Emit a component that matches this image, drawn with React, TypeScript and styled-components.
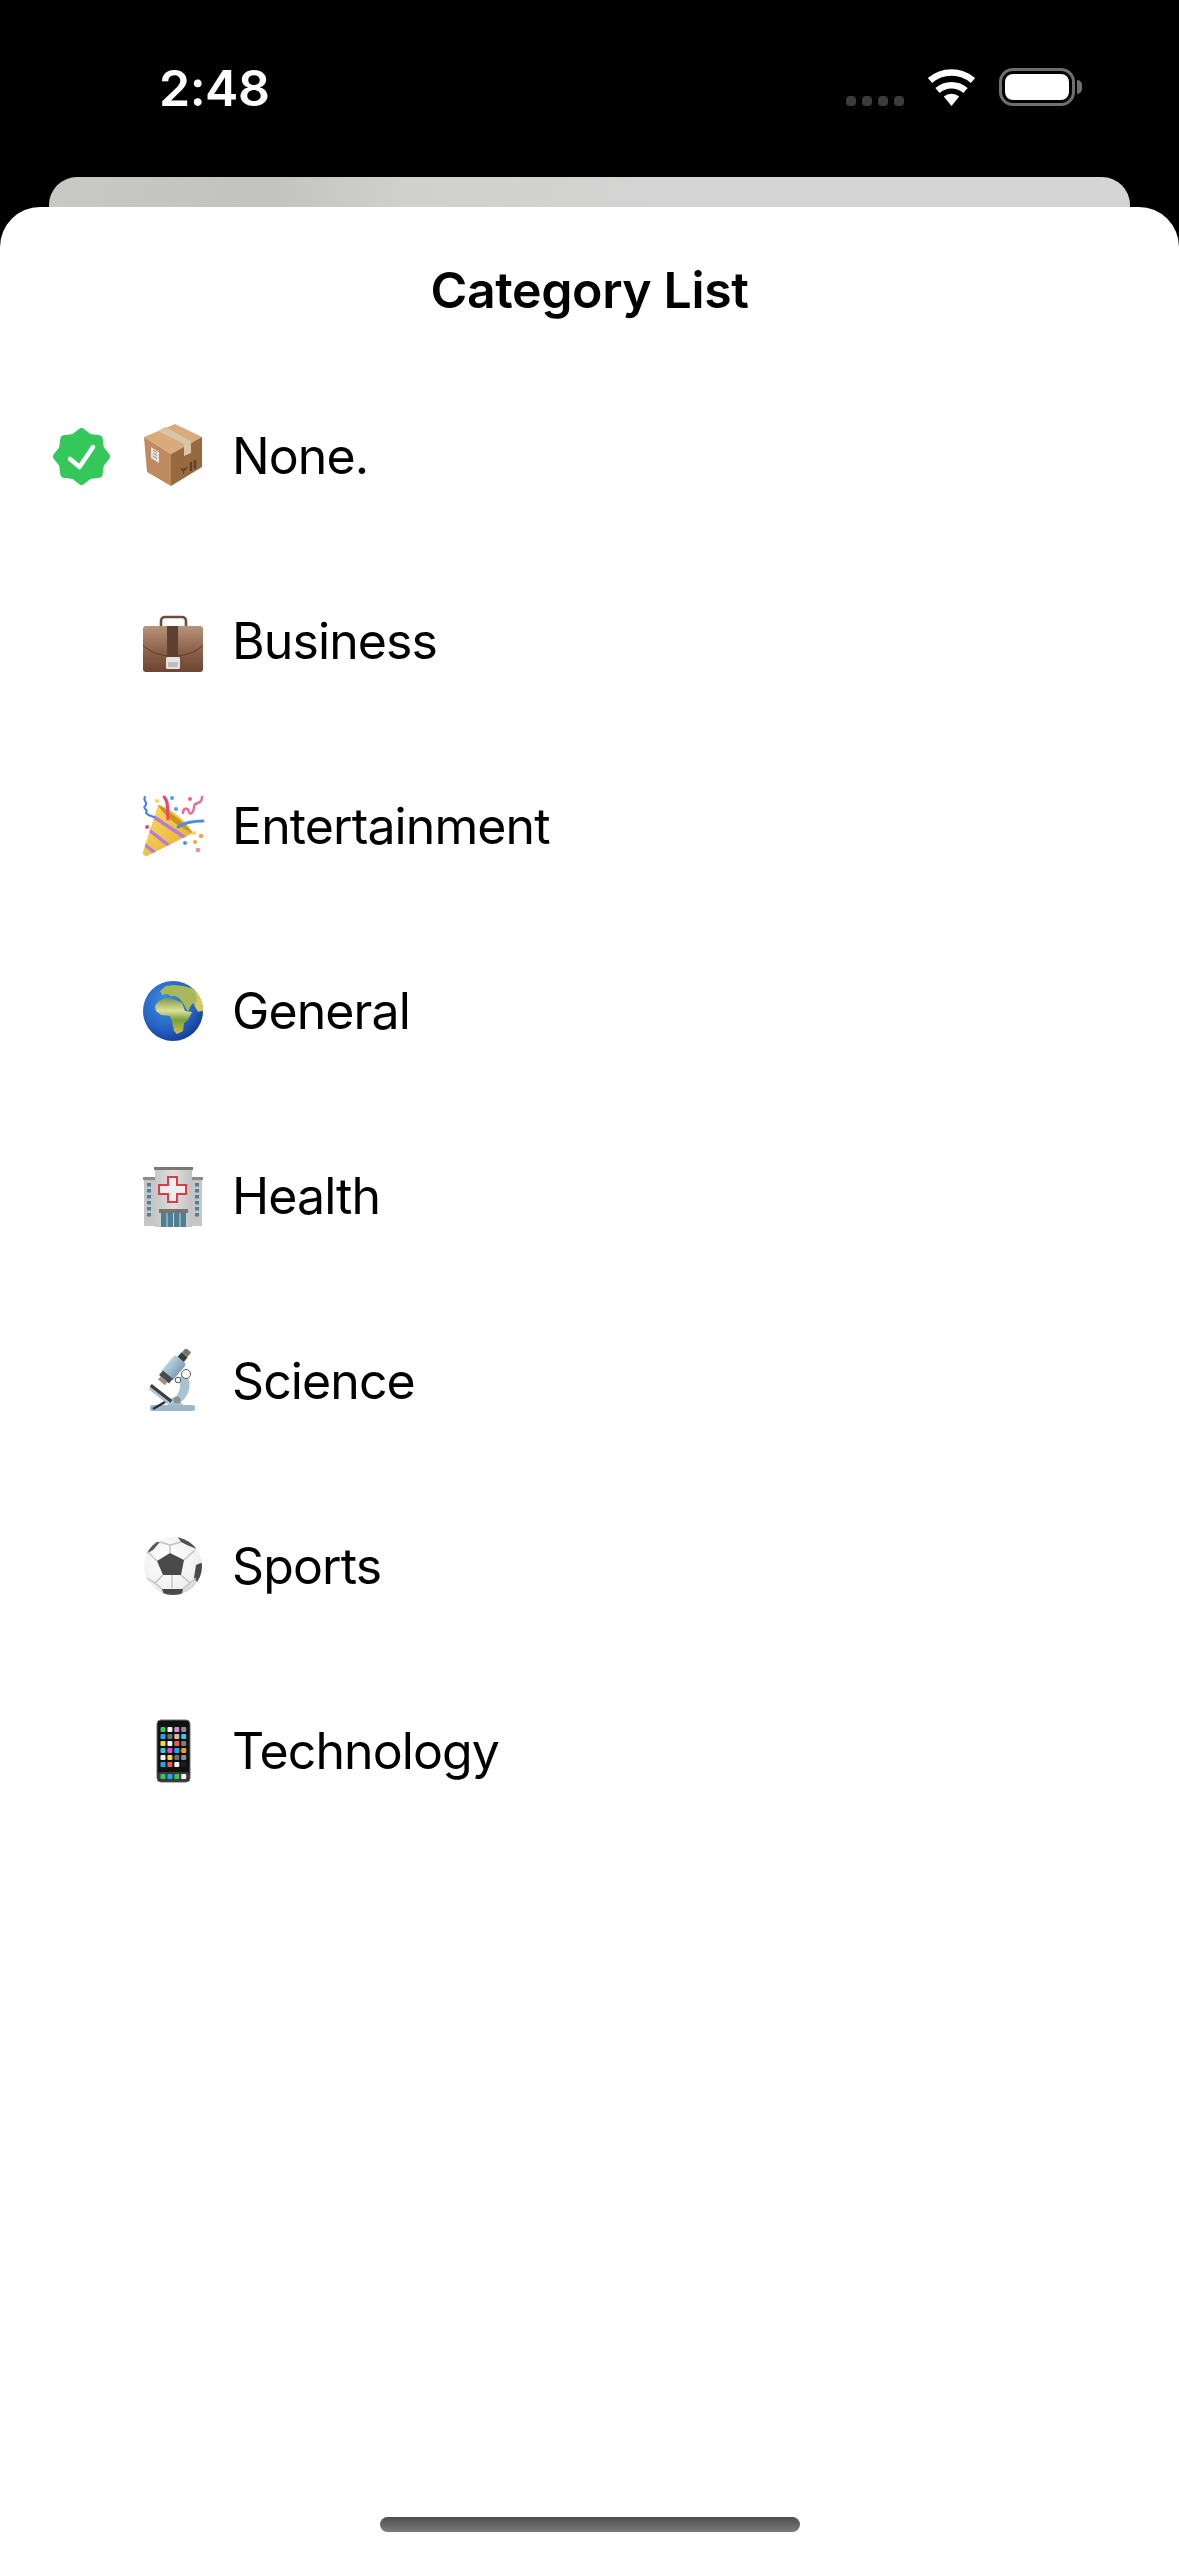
import styled, { createGlobalStyle } from "styled-components";
import type { ReactNode } from "react";

const GlobalStyle = createGlobalStyle`
  *,*::before,*::after{ box-sizing:border-box; }
  html,body,#root{ height:100%; }
  body{
    margin:0;
    background:#000;
    font-family: Inter, "Liberation Sans", sans-serif;
    -webkit-font-smoothing:antialiased;
  }
`;

const Page = styled.div`
  display: flex;
  flex-direction: column;
  height: 2556px;
  background: #000;
`;

/* --- Status bar --- */
const StatusBar = styled.header`
  display: flex;
  justify-content: space-between;
  align-items: flex-start;
  height: 177px;
  padding: 58px 104px 0 159px;
`;

const Clock = styled.span`
  color: #fff;
  font-size: 50px;
  line-height: 60px;
  font-weight: 600;
  letter-spacing: -0.5px;
`;

const StatusIcons = styled.div`
  display: flex;
  align-items: flex-end;
  margin-top: 10px;
`;

const SignalDots = styled.div`
  display: flex;
  gap: 6px;
  margin-right: 23px;
`;

const SignalDot = styled.i`
  display: block;
  width: 10px;
  height: 10px;
  border-radius: 4px;
  background: #3b3b3b;
`;

const Wifi = styled.svg`
  display: block;
  width: 49px;
  height: 37px;
  margin-right: 23px;
`;

const Battery = styled.div`
  position: relative;
  width: 76px;
  height: 38px;
  padding: 3px;
  border: 3px solid #6f6f6f;
  border-radius: 14px;

  &::after {
    content: "";
    position: absolute;
    top: 9px;
    right: -10px;
    width: 5px;
    height: 14px;
    border-radius: 0 5px 5px 0;
    background: #6f6f6f;
  }
`;

const BatteryLevel = styled.div`
  height: 100%;
  border-radius: 8px;
  background: #fff;
`;

/* --- Sheets --- */
const BackCard = styled.div`
  flex: none;
  height: 30px;
  margin: 0 49px;
  border-radius: 28px 28px 0 0;
  background: linear-gradient(90deg, #c8c8c6 0%, #c2c2c0 20%, #d0d0ce 33%, #d5d5d5 60%, #d5d5d5 100%);
`;

const Sheet = styled.main`
  flex: 1;
  display: flex;
  flex-direction: column;
  border-radius: 40px 40px 0 0;
  background: #fff;
`;

const Title = styled.h1`
  margin: 0;
  padding: 53px 0 44px;
  color: #000;
  font-size: 50px;
  line-height: 60px;
  font-weight: 600;
  letter-spacing: -0.4px;
  text-align: center;
`;

const List = styled.ul`
  margin: 0;
  padding: 0;
  list-style: none;
`;

const Row = styled.li`
  display: flex;
  align-items: center;
  height: 184.9px;
  padding-left: 53px;
`;

const CheckSlot = styled.div`
  flex: none;
  width: 57px;
  height: 57px;
  margin-right: 31px;
`;

const Glyph = styled.svg`
  display: block;
  flex: none;
  width: 64px;
  height: 64px;
  margin-right: 27px;
`;

const Label = styled.span`
  color: #000;
  font-size: 50px;
  line-height: 60px;
  font-weight: 400;
  letter-spacing: -0.9px;
`;

const HomeIndicator = styled.div`
  flex: none;
  width: 420px;
  height: 15px;
  margin: auto auto 24px;
  border-radius: 8px;
  background: linear-gradient(180deg, #4e4e4e, #7c7c7c);
`;

/* --- Drawings --- */
function sealPoints() {
  const pts: string[] = [];
  for (let i = 0; i < 16; i++) {
    const r = i % 2 === 0 ? 25 : 20.5;
    const a = (i * Math.PI) / 8 - Math.PI / 2;
    pts.push(`${(28.5 + r * Math.cos(a)).toFixed(2)},${(28.5 + r * Math.sin(a)).toFixed(2)}`);
  }
  return pts.join(" ");
}

const CheckBadge = () => (
  <svg viewBox="0 0 57 57" width="57" height="57">
    <polygon points={sealPoints()} fill="#34c759" stroke="#34c759" strokeWidth="7" strokeLinejoin="round" />
    <path d="M17 31l9.500 8L40 19" fill="none" stroke="#fff" strokeWidth="4.500" strokeLinecap="round" strokeLinejoin="round" />
  </svg>
);

const WifiIcon = () => (
  <Wifi viewBox="0 0 49 37">
    <path d="M24.5 37L16.8 27.6A12 12 0 0 1 32.2 27.6Z" fill="#fff" />
    <path d="M10.5 21.5A21 21 0 0 1 38.5 21.5" fill="none" stroke="#fff" strokeWidth="6.5" />
    <path d="M3 11.5A33 33 0 0 1 46 11.5" fill="none" stroke="#fff" strokeWidth="6.5" />
  </Wifi>
);

const BoxGlyph = () => (
  <Glyph viewBox="0 0 64 64">
    <path d="M34 0L61 13L30 30L3 13Z" fill="#d9ab7c" />
    <path d="M3 13L30 30V62L6 48Z" fill="#bd8b5f" />
    <path d="M61 13V43L30 62V30Z" fill="#96693f" />
    <path d="M17 7L24 3L50 17V29L43 32V20Z" fill="#d8c4a6" />
    <path d="M10 23L18 28V39L10 34Z" fill="#e6e2dc" />
    <path d="M12 26l4 2.5M12 29l4 2.5M12 32l4 2.5" stroke="#8a8a86" strokeWidth="1" />
    <path d="M40 44l3 1 3-3-1 4-2 1v3h-1v-3l-2-1z" fill="#5d412a" />
    <path d="M50 38v9M54 36v9" stroke="#5d412a" strokeWidth="2.4" />
  </Glyph>
);

const BriefcaseGlyph = () => (
  <Glyph viewBox="0 0 64 64">
    <defs>
      <linearGradient id="bag" x1="0" y1="0" x2="0" y2="1">
        <stop offset="0" stopColor="#b8937a" />
        <stop offset="0.55" stopColor="#8a6149" />
        <stop offset="1" stopColor="#6b4433" />
      </linearGradient>
    </defs>
    <path d="M20 17v-5c0-2.500 2-4 4-4h17c2 0 4 1.500 4 4v5" fill="none" stroke="#6e4c39" strokeWidth="2.600" />
    <rect x="2" y="17" width="60" height="46" rx="3" fill="url(#bag)" />
    <path d="M2 36c8 8 18 11 30 11s22-3 30-11" fill="none" stroke="#5c3b2b" strokeWidth="1" />
    <rect x="26" y="17" width="11" height="32" fill="#5f3f2f" />
    <rect x="25" y="48" width="14" height="12" rx="1.500" fill="#e4e4e2" />
    <rect x="27" y="53" width="10" height="5" rx="1" fill="#bdbdbb" />
  </Glyph>
);

const PopperGlyph = () => (
  <Glyph viewBox="0 0 64 64">
    <defs>
      <linearGradient id="cone" x1="0" y1="0" x2="1" y2="1">
        <stop offset="0" stopColor="#fbdc62" />
        <stop offset="1" stopColor="#e6ab2e" />
      </linearGradient>
      <clipPath id="coneClip">
        <path d="M2 58L17 11L52 39L6 62Q1 62 2 58Z" />
      </clipPath>
    </defs>
    <path d="M2 58L17 11C28 12 46 28 52 39L6 62Q1 62 2 58Z" fill="url(#cone)" />
    <g clipPath="url(#coneClip)" fill="none" stroke="#b67ad8" strokeWidth="3.400">
      <path d="M8 36L36 58" />
      <path d="M13 23L46 45" />
      <path d="M3 50L18 62" />
    </g>
    <path d="M17 11C24 13 42 28 52 39C44 37 24 24 17 11Z" fill="#c9951f" />
    <path d="M27 25C26 15 28 7 23 3" fill="none" stroke="#ee4470" strokeWidth="3" strokeLinecap="round" />
    <path d="M37 33C44 28 52 27 62 27" fill="none" stroke="#4a8cf0" strokeWidth="3" strokeLinecap="round" />
    <path d="M4 3C1 6 8 9 4 12C1 14 8 16 5 19C7 22 11 22 13 23" fill="none" stroke="#3f7ff0" strokeWidth="2" strokeLinecap="round" />
    <path d="M42 19C42 14 47 13 48 18C49 22 53 18 53 13C53 8 58 10 60 7C61 5 61 4 61 3" fill="none" stroke="#ef6a92" strokeWidth="2.400" strokeLinecap="round" />
    <circle cx="16" cy="7" r="2" fill="#f5d54a" />
    <circle cx="31" cy="4" r="2" fill="#4f9cf5" />
    <circle cx="35" cy="15" r="2" fill="#4f9cf5" />
    <circle cx="49" cy="5" r="2" fill="#ee5f8c" />
    <circle cx="6" cy="33" r="2" fill="#e8476e" />
    <circle cx="53" cy="39" r="2" fill="#f5d54a" />
    <circle cx="60" cy="42" r="2.200" fill="#f5a04a" />
    <circle cx="54" cy="48" r="2" fill="#f5a04a" />
    <circle cx="44" cy="49" r="2" fill="#4f8cf0" />
    <circle cx="57" cy="56" r="2.300" fill="#f08ab0" />
  </Glyph>
);

const GlobeGlyph = () => (
  <Glyph viewBox="0 0 64 64">
    <defs>
      <radialGradient id="ocean" cx="0.4" cy="0.35" r="0.7">
        <stop offset="0" stopColor="#3f8fe6" />
        <stop offset="0.65" stopColor="#2462c4" />
        <stop offset="1" stopColor="#163a92" />
      </radialGradient>
      <linearGradient id="land" x1="0" y1="0" x2="0" y2="1">
        <stop offset="0" stopColor="#7f9f47" />
        <stop offset="0.35" stopColor="#dfe09a" />
        <stop offset="0.6" stopColor="#79a03e" />
        <stop offset="1" stopColor="#d3bd4a" />
      </linearGradient>
      <clipPath id="globeClip"><circle cx="32" cy="32" r="30" /></clipPath>
    </defs>
    <circle cx="32" cy="32" r="30" fill="url(#ocean)" />
    <g clipPath="url(#globeClip)">
      <path d="M14 27C18 20 26 18 31 20L37 22L41 24L44 32L51 33L47 41L43 44L42 52L36 55L33 52L31 43L29 37L20 36L15 32Z" fill="url(#land)" />
      <path d="M19 12L25 7L33 6L42 7L54 10L62 22L62 32L57 33L54 28L52 24L49 28L47 33L42 24L38 19L34 17L30 17L26 15L21 16Z" fill="#a9b85a" />
      <path d="M53 10L62 20L62 31L57 32L54 27L56 20Z" fill="#d6c95e" />
      <path d="M0 38l3 2 1 7-2 3Z" fill="#d3bd4a" />
    </g>
  </Glyph>
);

const HospitalGlyph = () => {
  const rows = [19, 25, 31, 37, 43, 49];
  return (
    <Glyph viewBox="0 0 64 64">
      <defs>
        <linearGradient id="wall" x1="0" y1="0" x2="1" y2="0">
          <stop offset="0" stopColor="#c7c7c7" />
          <stop offset="0.5" stopColor="#dedede" />
          <stop offset="1" stopColor="#c2c2c2" />
        </linearGradient>
      </defs>
      <rect x="3" y="14" width="58" height="48" fill="#c6c6c6" />
      <rect x="2" y="13" width="60" height="3" fill="#8f8c88" />
      <rect x="14" y="4" width="37" height="59" fill="url(#wall)" />
      <rect x="13" y="3" width="39" height="3" fill="#7b7875" />
      {rows.map((y) => (
        <g key={y} fill="#4e7f9e">
          <rect x="6" y={y} width="4" height="3.500" />
          <rect x="54" y={y} width="4" height="3.500" />
        </g>
      ))}
      <path d="M27 13h9v8h9v9h-9v8h-9v-8h-9v-9h9Z" fill="#eee" stroke="#e23a44" strokeWidth="2" />
      <rect x="18" y="45" width="29" height="4" fill="#77736f" />
      <rect x="20" y="49" width="25" height="14" fill="#4f7f95" />
      <path d="M26 49v14M32.500 49v14M39 49v14" stroke="#c4d6dd" strokeWidth="1" />
    </Glyph>
  );
};

const MicroscopeGlyph = () => (
  <Glyph viewBox="0 0 64 64">
    <defs>
      <linearGradient id="tube" x1="0" y1="0" x2="1" y2="0">
        <stop offset="0" stopColor="#b9d3e4" />
        <stop offset="1" stopColor="#7d9fb5" />
      </linearGradient>
    </defs>
    <path d="M43 24C52 30 50 48 38 54L30 54C38 46 42 36 37 30Z" fill="#a9c3d3" />
    <rect x="9" y="56" width="45" height="6" rx="2" fill="#9ab9cc" />
    <path d="M29 50L36 47L42 56H27Z" fill="#a8c2d2" />
    <circle cx="36" cy="51" r="3.500" fill="#8f8f8d" />
    <g transform="rotate(40 31 20)">
      <rect x="24" y="7" width="15" height="22" rx="3" fill="url(#tube)" />
      <rect x="25" y="27" width="13" height="6" fill="#4b4b4b" />
      <rect x="27" y="33" width="9" height="4" fill="#9a948c" />
      <rect x="27.500" y="1" width="8" height="6" fill="#3c3c3c" />
      <rect x="28" y="-5" width="7" height="6" rx="1" fill="#77736e" />
    </g>
    <g transform="rotate(38 20 46)">
      <rect x="6" y="43" width="26" height="3.500" fill="#3f3f3f" />
      <rect x="7" y="46.500" width="24" height="2.500" fill="#a8c2d2" />
    </g>
    <path d="M12 60L24 53" stroke="#2e2e2e" strokeWidth="2.500" />
    <circle cx="45" cy="25" r="4.500" fill="#fff" stroke="#555" strokeWidth="1" />
    <circle cx="37" cy="31" r="2.800" fill="#fff" stroke="#555" strokeWidth="1" />
  </Glyph>
);

const BallGlyph = () => (
  <Glyph viewBox="0 0 64 64">
    <defs>
      <radialGradient id="ball" cx="0.42" cy="0.38" r="0.7">
        <stop offset="0" stopColor="#ffffff" />
        <stop offset="0.75" stopColor="#f0f0f0" />
        <stop offset="1" stopColor="#c4c4c4" />
      </radialGradient>
      <clipPath id="ballClip"><circle cx="32" cy="32" r="29" /></clipPath>
    </defs>
    <circle cx="32" cy="32" r="29" fill="url(#ball)" />
    <g clipPath="url(#ballClip)">
      <path d="M29 19L43 26L40 41H22L16 27Z" fill="#4a4a4a" />
      <path d="M36 2L56 4L58 16L46 11L40 8Z" fill="#505050" />
      <path d="M19 8L8 8L5 20L12 16Z" fill="#5a5a5a" />
      <path d="M62 28L55 31L53 44L57 49L63 44Z" fill="#4a4a4a" />
      <path d="M21 55L42 55L40 64H24Z" fill="#4a4a4a" />
      <g fill="none" stroke="#c2c2c2" strokeWidth="1.400">
        <path d="M29 19V11L19 8M29 11L40 8M43 26L54 16M16 27L7 18M22 41L14 49L4 43M14 49L21 55" />
        <path d="M40 41L49 49L42 55M49 49L55 44M31 41V54" />
      </g>
    </g>
  </Glyph>
);

const PHONE_APPS = [
  ["#34c759", "#f2f2f2", "#d58ce8", "#8e8e8e"],
  ["#1ea7f2", "#6d6d6d", "#d9bc9c", "#35c9ef"],
  ["#f5d93c", "#f2f2f2", "#ef5a50", "#7b7b7b"],
  ["#35c9d8", "#d94fd6", "#1ea7f2", "#f59a0c"],
  ["#f2f2f2", "#f5d93c", "#6d6d6d", "#8e8e8e"],
  ["#1ea7f2", "#ef5a50", "#f2f2f2", "#1d1d1d"],
];

const PhoneGlyph = () => (
  <Glyph viewBox="0 0 64 64">
    <rect x="16" y="1" width="33" height="62" rx="4" fill="#111" stroke="#6d6d6d" strokeWidth="1" />
    {PHONE_APPS.map((row, r) =>
      row.map((c, i) => <rect key={`${r}-${i}`} x={19.500 + i * 6.900} y={8 + r * 7} width="5" height="5" rx="1" fill={c} />),
    )}
    <rect x="17" y="53" width="31" height="9" rx="3" fill="#3a3a3a" />
    {["#34c759", "#1ea7f2", "#34c759", "#f2f2f2"].map((c, i) => (
      <rect key={i} x={19.500 + i * 6.900} y="55" width="5" height="5" rx="1" fill={c} />
    ))}
  </Glyph>
);

const categories: { name: string; art: ReactNode; selected?: boolean }[] = [
  { name: "None.", art: <BoxGlyph />, selected: true },
  { name: "Business", art: <BriefcaseGlyph /> },
  { name: "Entertainment", art: <PopperGlyph /> },
  { name: "General", art: <GlobeGlyph /> },
  { name: "Health", art: <HospitalGlyph /> },
  { name: "Science", art: <MicroscopeGlyph /> },
  { name: "Sports", art: <BallGlyph /> },
  { name: "Technology", art: <PhoneGlyph /> },
];

export default function App() {
  return (
    <Page>
      <GlobalStyle />
      <StatusBar>
        <Clock>2:48</Clock>
        <StatusIcons>
          <SignalDots>
            <SignalDot />
            <SignalDot />
            <SignalDot />
            <SignalDot />
          </SignalDots>
          <WifiIcon />
          <Battery>
            <BatteryLevel />
          </Battery>
        </StatusIcons>
      </StatusBar>
      <BackCard />
      <Sheet>
        <Title>Category List</Title>
        <List>
          {categories.map((c) => (
            <Row key={c.name}>
              <CheckSlot>{c.selected && <CheckBadge />}</CheckSlot>
              {c.art}
              <Label>{c.name}</Label>
            </Row>
          ))}
        </List>
        <HomeIndicator />
      </Sheet>
    </Page>
  );
}
